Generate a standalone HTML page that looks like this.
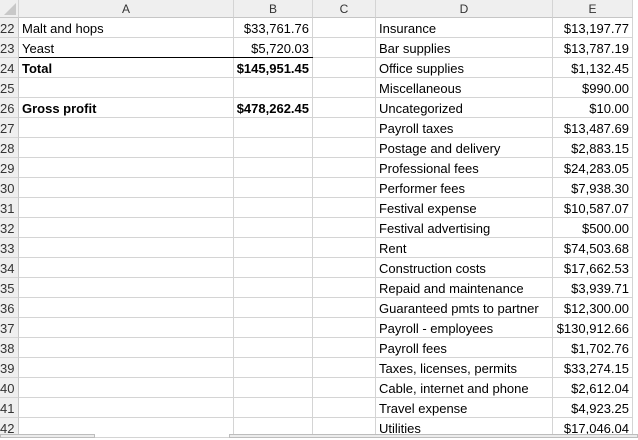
<!DOCTYPE html>
<html><head><meta charset="utf-8"><style>
body{margin:0;width:638px;height:438px;overflow:hidden;background:#fff;position:relative;font-family:"Liberation Sans",sans-serif;font-size:13px;color:#000}
.hdr{position:absolute;top:0;height:18px;background:#efefef;border-right:1px solid #d4d4d4;border-bottom:1px solid #c6c6c6;box-sizing:border-box;text-align:center;line-height:19px;font-size:12px;color:#333}
.rn{position:absolute;left:0;width:19px;height:20px;background:#efefef;border-right:1px solid #c6c6c6;border-bottom:1px solid #d4d4d4;box-sizing:border-box;font-size:13px;line-height:22px;color:#333;padding-left:0px}
.vl{position:absolute;top:18px;bottom:0;width:1px;background:#d4d4d4}
.hl{position:absolute;left:19px;width:614px;height:1px;background:#d4d4d4}
.t{position:absolute;height:20px;line-height:22px;white-space:nowrap}
.r{text-align:right}
b{font-weight:bold}
</style></head><body>
<div class="hdr" style="left:0;width:19px"><svg width="14" height="14" style="position:absolute;left:3px;top:2px"><path d="M13 1 L13 13 L1 13 Z" fill="#c8c8c8"/></svg></div>
<div class="hdr" style="left:19px;width:215px">A</div>
<div class="hdr" style="left:234px;width:79px">B</div>
<div class="hdr" style="left:313px;width:63px">C</div>
<div class="hdr" style="left:376px;width:177px">D</div>
<div class="hdr" style="left:553px;width:80px">E</div>
<div class="hdr" style="left:633px;width:5px;border:none;background:#fff"></div>

<div class="vl" style="left:233px"></div>
<div class="vl" style="left:312px"></div>
<div class="vl" style="left:375px"></div>
<div class="vl" style="left:552px"></div>
<div class="vl" style="left:632px"></div>

<div id="g"></div>
<script>
var rows=[["Malt and hops","$33,761.76","Insurance","$13,197.77"],["Yeast","$5,720.03","Bar supplies","$13,787.19"],["<b>Total</b>","<b>$145,951.45</b>","Office supplies","$1,132.45"],["","","Miscellaneous","$990.00"],["<b>Gross profit</b>","<b>$478,262.45</b>","Uncategorized","$10.00"],["","","Payroll taxes","$13,487.69"],["","","Postage and delivery","$2,883.15"],["","","Professional fees","$24,283.05"],["","","Performer fees","$7,938.30"],["","","Festival expense","$10,587.07"],["","","Festival advertising","$500.00"],["","","Rent","$74,503.68"],["","","Construction costs","$17,662.53"],["","","Repaid and maintenance","$3,939.71"],["","","Guaranteed pmts to partner","$12,300.00"],["","","Payroll - employees","$130,912.66"],["","","Payroll fees","$1,702.76"],["","","Taxes, licenses, permits","$33,274.15"],["","","Cable, internet and phone","$2,612.04"],["","","Travel expense","$4,923.25"],["","","Utilities","$17,046.04"]];
var h="";
for(var i=0;i<rows.length;i++){var y=18+i*20,r=rows[i];
h+='<div class="rn" style="top:'+y+'px">'+(22+i)+'</div>';
h+='<div class="hl" style="top:'+(y+19)+'px"></div>';
h+='<div class="t" style="left:22px;top:'+y+'px">'+r[0]+'</div>';
h+='<div class="t r" style="left:234px;width:75px;top:'+y+'px">'+r[1]+'</div>';
h+='<div class="t" style="left:379px;top:'+y+'px">'+r[2]+'</div>';
h+='<div class="t r" style="left:553px;width:76px;top:'+y+'px">'+r[3]+'</div>';}
h+='<div style="position:absolute;left:19px;top:57px;width:294px;height:1px;background:#000"></div>';
h+='<div style="position:absolute;left:0;top:434px;width:95px;height:4px;background:#ececec;border:1px solid #bdbdbd;box-sizing:border-box"></div>';
h+='<div style="position:absolute;left:229px;top:434px;width:409px;height:4px;background:#ececec;border:1px solid #bdbdbd;box-sizing:border-box"></div>';
document.getElementById("g").innerHTML=h;
</script>
</body></html>
